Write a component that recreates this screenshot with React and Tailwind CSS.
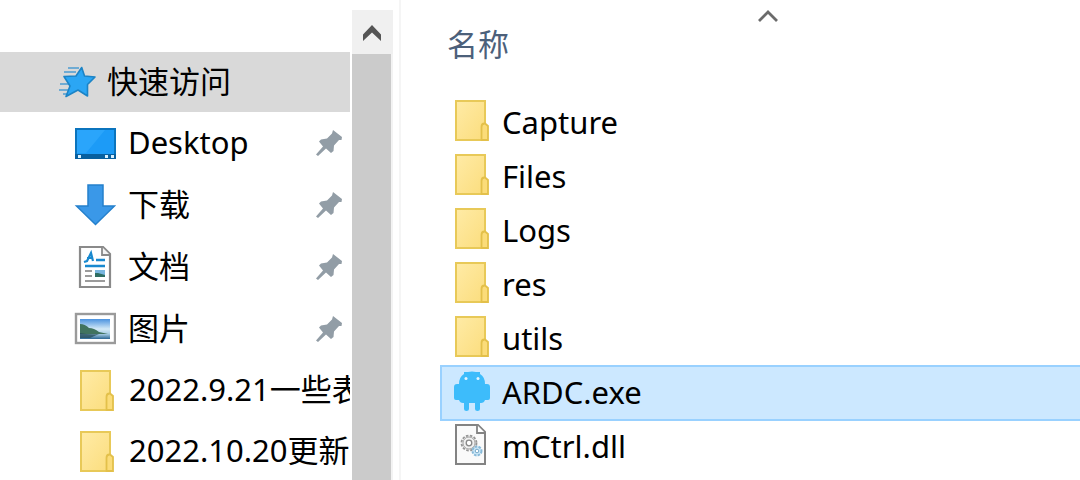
import React from "react";

function StarIcon() {
  return (
    <svg width="40" height="36" viewBox="0 0 40 36" className="shrink-0" aria-hidden="true">
      <path d="M9 4H20M5 8H17M1 20H10M0 26H9M4 30H8" stroke="#6fabd3" strokeWidth="1.800" />
      <path
        d="M22.700 3.500L25.500 12L36 13L28.500 20.500L28.500 32L19 26L7 32.500L11 22L5 12.500L17 12Z"
        fill="#2ba6f4"
        stroke="#1c84c6"
        strokeWidth="1.600"
        strokeLinejoin="round"
      />
    </svg>
  );
}

function DesktopIcon() {
  return (
    <svg width="42" height="42" viewBox="0 0 42 42" className="shrink-0" aria-hidden="true">
      <rect x="2" y="7" width="39" height="29" fill="#1c9bf7" stroke="#0b74bd" strokeWidth="2" />
      <path d="M3 31V8H31L12 31Z" fill="#2aa5fb" />
      <path d="M1 32H42V37H1Z" fill="#075f9f" />
      <path d="M4 33H7V36H4ZM31 33H34V36H31ZM37 33H40V36H37Z" fill="#d8f0ff" />
    </svg>
  );
}

function DownloadIcon() {
  return (
    <svg width="42" height="42" viewBox="0 0 42 42" className="shrink-0" aria-hidden="true">
      <path
        d="M14 1H29V22H40.500L21.500 40.500L2.500 22H14Z"
        fill="#3a98e8"
        stroke="#2580cc"
        strokeWidth="1.500"
      />
    </svg>
  );
}

function DocumentIcon() {
  return (
    <svg width="42" height="42" viewBox="0 0 42 42" className="shrink-0" aria-hidden="true">
      <path d="M6 1H29L36 8V41H6Z" fill="#fff" stroke="#8a8a8a" strokeWidth="2.200" />
      <path d="M28 1V9H36" fill="#f4f4f4" stroke="#8a8a8a" strokeWidth="1.800" />
      <path d="M10 16L13 15L17 7L19 15M13 12H19" fill="none" stroke="#1889cf" strokeWidth="2.200" />
      <path d="M22 14H31M11 20H31" stroke="#1889cf" strokeWidth="2.600" />
      <path d="M11 25H18M11 30H18M11 35H31" stroke="#9b9b9b" strokeWidth="1.800" />
      <rect x="21" y="24" width="10" height="7" fill="#79b6df" />
      <path d="M21 27L24 27L31 29V31H21Z" fill="#2f6e62" />
    </svg>
  );
}

function PictureIcon() {
  return (
    <svg width="42" height="42" viewBox="0 0 42 42" className="shrink-0" aria-hidden="true">
      <defs>
        <linearGradient id="sky" x1="0" y1="0" x2="0" y2="1">
          <stop offset="0" stopColor="#4b92df" />
          <stop offset="0.500" stopColor="#d3e9f7" />
          <stop offset="0.750" stopColor="#a5cbe2" />
          <stop offset="1" stopColor="#2c6693" />
        </linearGradient>
      </defs>
      <rect x="2" y="6" width="39" height="29" fill="#fff" stroke="#9a9a9a" strokeWidth="2.400" />
      <rect x="6" y="11" width="30" height="20" fill="url(#sky)" />
      <path d="M6 16Q11 16 15 20Q20 20 25 24L34 26H6Z" fill="#41735f" />
      <path d="M6 25Q15 27 25 26L16 30H6Z" fill="#284f5c" opacity="0.800" />
    </svg>
  );
}

function FolderIcon() {
  return (
    <svg width="36" height="42" viewBox="0 0 36 42" className="shrink-0" aria-hidden="true">
      <defs>
        <linearGradient id="folder" x1="0" y1="0" x2="1" y2="1">
          <stop offset="0" stopColor="#ffeba6" />
          <stop offset="1" stopColor="#fbdd7d" />
        </linearGradient>
      </defs>
      <path d="M2 1H31V40H2Z" fill="url(#folder)" stroke="#e8c958" strokeWidth="2" />
      <path
        d="M27.500 40V27Q27.500 23.500 30.500 23.500H31L34 26V40Z"
        fill="#fbdc79"
        stroke="#e3c04a"
        strokeWidth="1.800"
      />
    </svg>
  );
}

function AndroidIcon() {
  return (
    <svg width="36" height="42" viewBox="0 0 36 42" className="shrink-0" aria-hidden="true">
      <path
        d="M5 14Q5 7 10 4V2H14Q18 1 22 2H26V4Q31 7 31 14L33 14Q36 14 36 17V28Q36 30 34 30H31Q30 33 27 33H26V39Q26 41 23.500 41Q21 41 21 39V33H15V39Q15 41 12.500 41Q10 41 10 39V33H9Q6 33 5 30H2Q0 30 0 28V17Q0 14 3 14Z"
        fill="#3dbcfb"
      />
      <circle cx="12" cy="8.500" r="1.500" fill="#e3f5ff" />
      <circle cx="24" cy="8.500" r="1.500" fill="#e3f5ff" />
    </svg>
  );
}

function DllIcon() {
  return (
    <svg width="36" height="42" viewBox="0 0 36 42" className="shrink-0" aria-hidden="true">
      <path d="M2 1H24L31 8V40H2Z" fill="#fafafa" stroke="#838383" strokeWidth="2" />
      <path d="M23 1V9H31" fill="#fff" stroke="#838383" strokeWidth="1.800" />
      <circle cx="15" cy="19" r="7.500" fill="#eee" stroke="#959595" strokeWidth="1.800" strokeDasharray="2.500 1.500" />
      <circle cx="15" cy="19" r="6" fill="#f0f0f0" stroke="#a5a5a5" strokeWidth="1" />
      <circle cx="15" cy="19" r="2.800" fill="#fff" stroke="#888" strokeWidth="1.300" />
      <circle cx="23" cy="27" r="4.500" fill="#cde8f8" stroke="#87b9d8" strokeWidth="2" strokeDasharray="2.500 1.200" />
      <circle cx="23" cy="27" r="1.800" fill="#fff" stroke="#76a9c9" strokeWidth="1" />
    </svg>
  );
}

function PinIcon() {
  return (
    <svg width="26" height="26" viewBox="0 0 26 26" className="shrink-0" aria-hidden="true">
      <path
        d="M17 0L26 7L25.500 10L23 10L18 15.500L17.500 21L15 23L10 18.500L2 26L0 24.500L7 16.500L3 11.500L5 9.500L11 8.500L16 3.500Z"
        fill="#929da6"
      />
    </svg>
  );
}

const pinned = [
  { name: "Desktop", Icon: DesktopIcon },
  { name: "下载", Icon: DownloadIcon },
  { name: "文档", Icon: DocumentIcon },
  { name: "图片", Icon: PictureIcon },
];

const recent = ["2022.9.21一些表", "2022.10.20更新"];

const files = [
  { name: "Capture", Icon: FolderIcon },
  { name: "Files", Icon: FolderIcon },
  { name: "Logs", Icon: FolderIcon },
  { name: "res", Icon: FolderIcon },
  { name: "utils", Icon: FolderIcon },
  { name: "ARDC.exe", Icon: AndroidIcon, selected: true },
  { name: "mCtrl.dll", Icon: DllIcon },
];

function Sidebar() {
  return (
    <nav aria-label="快速访问" className="w-[350px] shrink-0 overflow-hidden pt-[52px]">
      <button type="button" className="flex h-[60px] w-full items-center gap-2 bg-[#d9d9d9] pl-[59px]">
        <StarIcon />
        <span className="pb-0.5">快速访问</span>
      </button>
      <ul>
        {pinned.map(({ name, Icon }) => (
          <li key={name}>
            <button type="button" className="flex h-[62px] w-full items-center gap-3 pr-2 pl-[74px] text-left">
              <Icon />
              <span className="flex-1 pb-0.5">{name}</span>
              <PinIcon />
            </button>
          </li>
        ))}
        {recent.map((name) => (
          <li key={name}>
            <button type="button" className="flex h-[61px] w-full items-center gap-3.5 pl-[79px] text-left">
              <FolderIcon />
              <span className="pb-1 whitespace-nowrap">{name}</span>
            </button>
          </li>
        ))}
      </ul>
    </nav>
  );
}

function Scrollbar() {
  return (
    <div className="mt-2.5 ml-0.5 flex w-[41px] shrink-0 flex-col bg-[#f3f3f3]">
      <button type="button" aria-label="Scroll up" className="flex h-11 items-center justify-center bg-[#f0f0f0] pt-0.5 pr-0.5">
        <svg width="20" height="18" viewBox="0 0 20 18" aria-hidden="true">
          <path d="M10 1L19 10.500V17L10 8.500L1 17V10.500Z" fill="#555" />
        </svg>
      </button>
      <div className="mr-0.5 flex-1 bg-[#cbcbcb]" />
    </div>
  );
}

function FileList() {
  return (
    <main className="min-w-0 flex-1 overflow-hidden border-l-2 border-[#f5f5f5] pl-10">
      <button type="button" className="flex h-24 w-[654px] flex-col pt-2.5 text-left text-[#4c607a]">
        <svg width="22" height="13" viewBox="0 0 22 13" className="self-center" aria-hidden="true">
          <path d="M2 11L11 2L20 11" fill="none" stroke="#6b6b6b" strokeWidth="2.800" />
        </svg>
        <span className="pl-1.5">名称</span>
      </button>
      <ul>
        {files.map(({ name, Icon, selected }) => (
          <li key={name}>
            <button
              type="button"
              className={
                selected
                  ? "flex h-[54px] w-[654px] items-center gap-3 bg-[#cce8ff] pb-1 pl-[13px] outline-2 -outline-offset-1 outline-[#99d1ff]"
                  : "flex h-[54px] w-[654px] items-center gap-3 pb-1 pl-[13px]"
              }
            >
              <Icon />
              <span className="pt-0.5">{name}</span>
            </button>
          </li>
        ))}
      </ul>
    </main>
  );
}

export default function App() {
  return (
    <div className="flex h-screen overflow-hidden bg-white font-['Noto_Sans','Noto_Sans_CJK_SC',sans-serif] text-[31px] leading-[42px] text-black">
      <Sidebar />
      <Scrollbar />
      <div className="w-1.5 shrink-0" />
      <FileList />
    </div>
  );
}
